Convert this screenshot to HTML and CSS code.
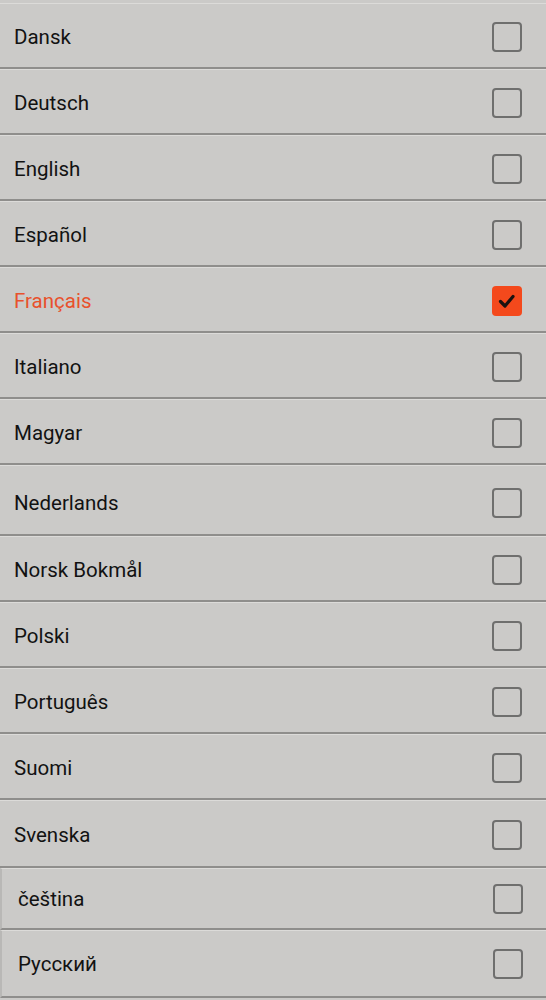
FILE: index.html
```html
<!DOCTYPE html>
<html lang="fr">
<head>
  <meta charset="UTF-8" />
  <meta name="viewport" content="width=device-width, initial-scale=1.0" />
  <title>Langue</title>
  <link rel="stylesheet" href="styles.css">
</head>
<body>
  <ul id="languages">
    <li class="row"><span class="label">Dansk</span><span class="box"></span></li>
    <li class="row"><span class="label">Deutsch</span><span class="box"></span></li>
    <li class="row"><span class="label">English</span><span class="box"></span></li>
    <li class="row"><span class="label">Español</span><span class="box"></span></li>
    <li class="row selected"><span class="label">Français</span>
      <span class="box checked">
        <svg width="30" height="30" viewBox="0 0 30 30"><polyline points="8.5,15.5 13,20 21,10.5" fill="none" stroke="#1b1210" stroke-width="3.2" stroke-linecap="round" stroke-linejoin="round"/></svg>
      </span>
    </li>
    <li class="row"><span class="label">Italiano</span><span class="box"></span></li>
    <li class="row"><span class="label">Magyar</span><span class="box"></span></li>
    <li class="row tall"><span class="label">Nederlands</span><span class="box"></span></li>
    <li class="row"><span class="label">Norsk Bokmål</span><span class="box"></span></li>
    <li class="row"><span class="label">Polski</span><span class="box"></span></li>
    <li class="row"><span class="label">Português</span><span class="box"></span></li>
    <li class="row"><span class="label">Suomi</span><span class="box"></span></li>
    <li class="row mid"><span class="label">Svenska</span><span class="box"></span></li>
    <li class="row shifted short"><span class="label">čeština</span><span class="box"></span></li>
    <li class="row shifted mid"><span class="label">Русский</span><span class="box"></span></li>
  </ul>
</body>
</html>
```

FILE: styles.css
```css
body {
  margin: 0;
  padding-top: 3px;
  background-color: #cbcac8;
  font-family: Roboto, "Liberation Sans", sans-serif;
}

#languages {
  list-style: none;
  margin: 0;
  padding: 0;
}

.row {
  box-sizing: border-box;
  height: 66px;
  display: flex;
  align-items: center;
  justify-content: space-between;
  padding: 3px 24px 0 14px;
  border-top: 1px solid #dcdbd9;
  border-bottom: 2px solid #8f8e8c;
}

.row.tall {
  height: 71px;
  padding-top: 6px;
}

.row.mid {
  height: 68px;
}

.row.short {
  height: 62px;
}

.row.shifted {
  padding-top: 0;
  padding-left: 16px;
  padding-right: 23px;
  border-left: 2px solid #b9b8b6;
}

.label {
  font-size: 20.5px;
  color: #121212;
}

.selected .label {
  color: #e8512c;
}

.box {
  box-sizing: border-box;
  width: 30px;
  height: 30px;
  border: 2px solid #6f6f6e;
  border-radius: 4px;
}

.box.checked {
  border: none;
  background-color: #f4491c;
  display: flex;
}
```
